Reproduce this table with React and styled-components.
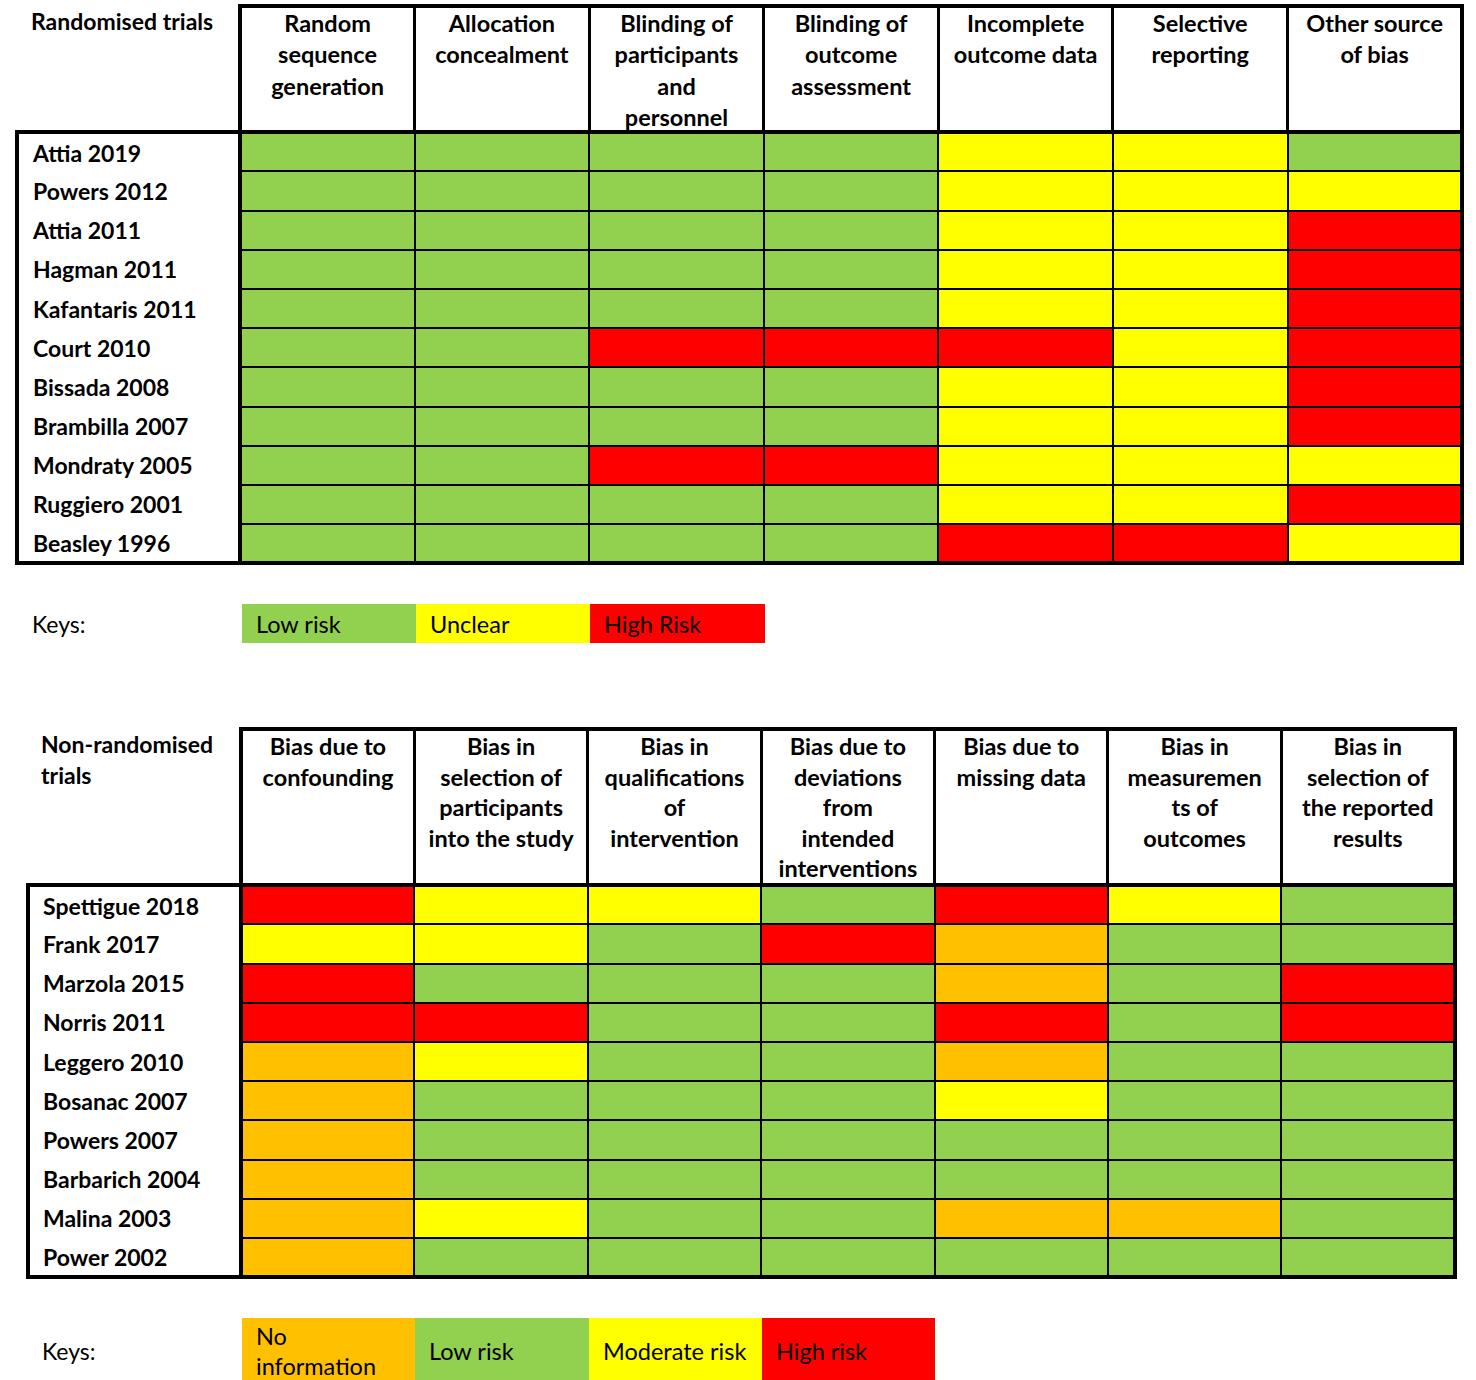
import React from "react";
import styled, { createGlobalStyle } from "styled-components";

const GlobalStyle = createGlobalStyle`
  body {
    margin: 0;
    background: #ffffff;
    color: #000000;
    font-family: Lato, "Open Sans", sans-serif;
  }
`;

const RISK = {
  G: "#92d050",
  Y: "#ffff00",
  R: "#ff0000",
  O: "#ffc000",
};

const Page = styled.div`
  width: 1476px;
  height: 1380px;
  overflow: hidden;
  padding-top: 4px;
  box-sizing: border-box;
`;

const Section = styled.section`
  margin-bottom: ${({ $gap }) => $gap}px;
`;

const Grid = styled.table`
  border-collapse: collapse;
  table-layout: fixed;
  width: ${({ $width }) => $width}px;
  margin-left: ${({ $left }) => $left}px;
`;

const CornerCell = styled.th`
  border: none;
  border-bottom: 4px solid #000;
  vertical-align: top;
  text-align: left;
  font-size: 23px;
  font-weight: 700;
  line-height: ${({ $lh }) => $lh}px;
  padding: 0 10px 0 ${({ $pad }) => $pad}px;
`;

const HeadRow = styled.tr`
  height: ${({ $h }) => $h}px;
`;

const HeadCell = styled.th`
  border: 3px solid #000;
  border-top-width: 4px;
  border-bottom-width: 4px;
  vertical-align: top;
  text-align: center;
  font-size: 23.5px;
  font-weight: 700;
  line-height: ${({ $lh }) => $lh}px;
  padding: 0 2px;
  background: #fff;

  &:nth-child(2) {
    border-left-width: 4px;
  }
  &:last-child {
    border-right-width: 4px;
  }
`;

/* last header line sits right on the thick rule, as in the source chart */
const HeadText = styled.div`
  margin-bottom: -3px;
`;

const Line = styled.span`
  display: block;
  white-space: nowrap;
`;

const BodyRow = styled.tr`
  height: 39.2px;

  &:last-child td {
    border-bottom: 4px solid #000;
  }
`;

const LabelCell = styled.td`
  border-left: 4px solid #000;
  border-right: 4px solid #000;
  padding: 0 0 0 ${({ $pad }) => $pad}px;
  font-size: 23px;
  font-weight: 700;
  white-space: nowrap;
  vertical-align: middle;
`;

const RiskCell = styled.td`
  border: 2px solid #000;
  background: ${({ $risk }) => RISK[$risk]};
  padding: 0;

  &:last-child {
    border-right-width: 4px;
  }
`;

const KeyRow = styled.div`
  display: flex;
  align-items: stretch;
  padding-left: ${({ $pad }) => $pad}px;
`;

const KeyLabel = styled.div`
  width: ${({ $w }) => $w}px;
  display: flex;
  align-items: center;
  font-size: 23px;
`;

const KeySwatch = styled.div`
  width: ${({ $w }) => $w}px;
  height: ${({ $h }) => $h}px;
  box-sizing: border-box;
  padding: 0 6px 0 14px;
  display: flex;
  flex-direction: column;
  justify-content: center;
  background: ${({ $risk }) => RISK[$risk]};
  font-size: 23.5px;
  line-height: 30px;
  white-space: nowrap;
`;

const randomisedHeads = [
  ["Random", "sequence", "generation"],
  ["Allocation", "concealment"],
  ["Blinding of", "participants", "and", "personnel"],
  ["Blinding of", "outcome", "assessment"],
  ["Incomplete", "outcome data"],
  ["Selective", "reporting"],
  ["Other source", "of bias"],
];

const randomisedRows = [
  ["Attia 2019", "GGGGYYG"],
  ["Powers 2012", "GGGGYYY"],
  ["Attia 2011", "GGGGYYR"],
  ["Hagman 2011", "GGGGYYR"],
  ["Kafantaris 2011", "GGGGYYR"],
  ["Court 2010", "GGRRRYR"],
  ["Bissada 2008", "GGGGYYR"],
  ["Brambilla 2007", "GGGGYYR"],
  ["Mondraty 2005", "GGRRYYY"],
  ["Ruggiero 2001", "GGGGYYR"],
  ["Beasley 1996", "GGGGRRY"],
];

const nonRandomisedHeads = [
  ["Bias due to", "confounding"],
  ["Bias in", "selection of", "participants", "into the study"],
  ["Bias in", "qualifications", "of", "intervention"],
  ["Bias due to", "deviations", "from", "intended", "interventions"],
  ["Bias due to", "missing data"],
  ["Bias in", "measuremen", "ts of", "outcomes"],
  ["Bias in", "selection of", "the reported", "results"],
];

const nonRandomisedRows = [
  ["Spettigue 2018", "RYYGRYG"],
  ["Frank 2017", "YYGROGG"],
  ["Marzola 2015", "RGGGOGR"],
  ["Norris 2011", "RRGGRGR"],
  ["Leggero 2010", "OYGGOGG"],
  ["Bosanac 2007", "OGGGYGG"],
  ["Powers 2007", "OGGGGGG"],
  ["Barbarich 2004", "OGGGGGG"],
  ["Malina 2003", "OYGGOOG"],
  ["Power 2002", "OGGGGGG"],
];

const RiskTable = ({ title, heads, rows, left, labelWidth, colWidth, headHeight, lineHeight, pad }) => (
  <Grid $width={labelWidth + colWidth * 7} $left={left}>
    <colgroup>
      <col style={{ width: labelWidth }} />
      {heads.map((_, i) => (
        <col key={i} style={{ width: colWidth }} />
      ))}
    </colgroup>
    <thead>
      <HeadRow $h={headHeight}>
        <CornerCell $lh={lineHeight} $pad={pad}>
          {title.map((t) => (
            <Line key={t}>{t}</Line>
          ))}
        </CornerCell>
        {heads.map((lines, i) => (
          <HeadCell key={i} $lh={lineHeight}>
            <HeadText>
              {lines.map((l, j) => (
                <Line key={j}>{l}</Line>
              ))}
            </HeadText>
          </HeadCell>
        ))}
      </HeadRow>
    </thead>
    <tbody>
      {rows.map(([name, risks]) => (
        <BodyRow key={name}>
          <LabelCell $pad={pad}>{name}</LabelCell>
          {risks.split("").map((r, i) => (
            <RiskCell key={i} $risk={r} />
          ))}
        </BodyRow>
      ))}
    </tbody>
  </Grid>
);

const App = () => {
  return (
    <Page>
      <GlobalStyle />
      <Section $gap={39}>
        <RiskTable
          title={["Randomised trials"]}
          heads={randomisedHeads}
          rows={randomisedRows}
          left={15}
          labelWidth={223}
          colWidth={174.6}
          headHeight={120}
          lineHeight={31.3}
          pad={14}
        />
      </Section>
      <Section $gap={84}>
        <KeyRow $pad={32}>
          <KeyLabel $w={210}>Keys:</KeyLabel>
          <KeySwatch $w={174} $h={39} $risk="G">Low risk</KeySwatch>
          <KeySwatch $w={174} $h={39} $risk="Y">Unclear</KeySwatch>
          <KeySwatch $w={175} $h={39} $risk="R">High Risk</KeySwatch>
        </KeyRow>
      </Section>
      <Section $gap={39}>
        <RiskTable
          title={["Non-randomised", "trials"]}
          heads={nonRandomisedHeads}
          rows={nonRandomisedRows}
          left={26}
          labelWidth={213}
          colWidth={173.4}
          headHeight={156}
          lineHeight={30.5}
          pad={13}
        />
      </Section>
      <Section $gap={0}>
        <KeyRow $pad={42}>
          <KeyLabel $w={200}>Keys:</KeyLabel>
          <KeySwatch $w={173} $h={66} $risk="O">
            <Line>No</Line>
            <Line>information</Line>
          </KeySwatch>
          <KeySwatch $w={174} $h={66} $risk="G">Low risk</KeySwatch>
          <KeySwatch $w={173} $h={66} $risk="Y">Moderate risk</KeySwatch>
          <KeySwatch $w={173} $h={66} $risk="R">High risk</KeySwatch>
        </KeyRow>
      </Section>
    </Page>
  );
};

export default App;
